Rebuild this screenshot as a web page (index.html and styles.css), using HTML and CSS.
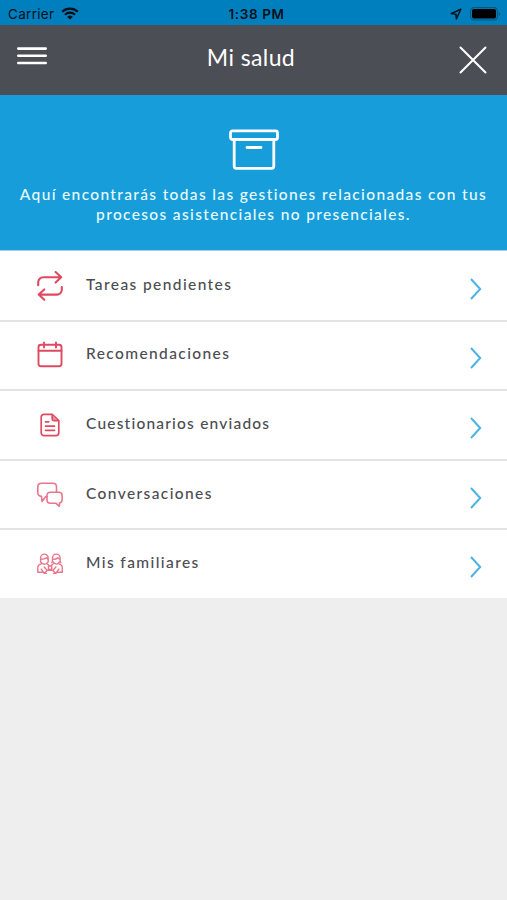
FILE: index.html
```html
<!DOCTYPE html>
<html lang="es">
<head>
    <meta charset="UTF-8">
    <meta name="viewport" content="width=device-width, initial-scale=1.0">
    <title>Mi salud</title>
    <link rel="stylesheet" href="styles.css">
</head>
<body>
    <div class="status-bar">
        <div class="status-left">
            <span class="carrier">Carrier</span>
            <svg width="18" height="13" viewBox="0 0 18 13" fill="none" stroke="#031019" stroke-width="2.2">
                <path d="M1.2 4.7a11.2 11.2 0 0 1 15.6 0M4 7.7a7.2 7.2 0 0 1 10 0"/>
                <path d="M9 12.6L6.2 9.9a4.1 4.1 0 0 1 5.6 0z" fill="#031019" stroke="none"/>
            </svg>
        </div>
        <span class="clock">1:38 PM</span>
        <div class="status-right">
            <svg width="12" height="12" viewBox="0 0 12 12" fill="none" stroke="#031019" stroke-width="1.5" stroke-linejoin="round">
                <path d="M10.8 1.2L1.2 5.6l4.7.6.5 4.7z"/>
            </svg>
            <svg width="31" height="14" viewBox="0 0 31 14">
                <rect x=".6" y=".6" width="26.8" height="12.4" rx="3.4" fill="none" stroke="#07577f" stroke-width="1.1"/>
                <rect x="2" y="2" width="24" height="9.6" rx="1.8" fill="#000"/>
                <path d="M28.7 4.7c2 .8 2 3.5 0 4.3z" fill="#07577f"/>
            </svg>
        </div>
    </div>

    <header class="nav-bar">
        <svg class="menu-icon" width="30" height="20" viewBox="0 0 30 20" stroke="#fff" stroke-width="2.6" stroke-linecap="round">
            <path d="M1.3 2.6h27.4M1.3 9.8h27.4M1.3 17h27.4"/>
        </svg>
        <h1>Mi salud</h1>
        <svg class="close-icon" width="28" height="28" viewBox="0 0 28 28" stroke="#fff" stroke-width="2" stroke-linecap="round">
            <path d="M1.5 1.5l25 25M26.5 1.5l-25 25"/>
        </svg>
    </header>

    <section class="hero">
        <svg width="50" height="42" viewBox="0 0 50 42" fill="none" stroke="#fff" stroke-width="2.8" stroke-linecap="round" stroke-linejoin="round">
            <rect x="1.5" y="1.9" width="47" height="8.6" rx="2"/>
            <path d="M5.2 10.5v26.8a2 2 0 0 0 2 2h35.6a2 2 0 0 0 2-2V10.5M18 18.5h14"/>
        </svg>
        <p>Aquí encontrarás todas las gestiones relacionadas con tus</p>
        <p>procesos asistenciales no presenciales.</p>
    </section>

    <ul class="menu">
        <li>
            <svg class="icon" viewBox="0 0 28 28" stroke-width="2.1">
                <path d="M2.2 13.3v-3a5 5 0 0 1 5-5h17.5M19.6 0l5.6 5.3-5.6 5.3M25.8 15v2.6a5 5 0 0 1-5 5H3.3M8.3 17.4l-5.6 5.2 5.6 5.2"/>
            </svg>
            <span class="label">Tareas pendientes</span>
            <svg class="chevron" viewBox="0 0 14 24"><path d="M2 2l9.2 10L2 22"/></svg>
        </li>
        <li>
            <svg class="icon" viewBox="0 0 28 28" stroke-width="1.9">
                <rect x="2.5" y="3.8" width="23" height="21.4" rx="2.5"/>
                <path d="M2.5 9.8h23M8 1.5v5M20 1.5v5"/>
            </svg>
            <span class="label">Recomendaciones</span>
            <svg class="chevron" viewBox="0 0 14 24"><path d="M2 2l9.2 10L2 22"/></svg>
        </li>
        <li>
            <svg class="icon" viewBox="0 0 28 28" stroke-width="1.7">
                <path d="M16.2 3.3H8A2.8 2.8 0 0 0 5.2 6v15.8A2.8 2.8 0 0 0 8 24.6h12a2.8 2.8 0 0 0 2.8-2.8V9.7zM16.2 3.3v4.6a1.8 1.8 0 0 0 1.8 1.8h4.8M9.5 10.8h3.2M9.5 15.2h9M9.5 19.3h9"/>
                <path d="M17 4.8l4.2 4.2H18a1 1 0 0 1-1-1z" fill="#ee8a9d" stroke="none"/>
            </svg>
            <span class="label tight">Cuestionarios enviados</span>
            <svg class="chevron" viewBox="0 0 14 24"><path d="M2 2l9.2 10L2 22"/></svg>
        </li>
        <li>
            <svg class="icon light" viewBox="0 0 28 28" stroke-width="1.6">
                <path d="M11 15.6H9.8L6 20.5l-.5-5.1C3.2 15.2 1.8 14 1.8 11.8V5.7c0-2.3 1.4-3.5 3.8-3.5h11.2c2.4 0 3.7 1.2 3.7 3.5v5.5"/>
                <path d="M14.4 11.2h8.4c2 0 3.3 1.2 3.3 3.2v4.4c0 2-.9 3-2.5 3.3l-.3 3.2-3.5-3.1h-5.4c-2.2 0-3.4-1.2-3.4-3.2v-4.6c0-2 1.2-3.2 3.4-3.2z"/>
            </svg>
            <span class="label">Conversaciones</span>
            <svg class="chevron" viewBox="0 0 14 24"><path d="M2 2l9.2 10L2 22"/></svg>
        </li>
        <li>
            <svg class="icon light" viewBox="0 0 28 28" stroke-width="1.4">
                <path d="M4.6 11.8V7.9a3.8 3.8 0 0 1 7.6 0v3.9c-1.1 1.7-2.3 2.5-3.8 2.5s-2.8-.8-3.8-2.5zM4.8 9.4c2.8 0 4.7-.5 5.6-1.7l1.7 1.7"/>
                <path d="M15.8 12.6c1-1.4.7-3 .7-4.7a3.8 3.8 0 0 1 7.6 0c0 1.7-.3 3.3.7 4.7M16.7 9.4c2.7 0 4.2-.5 5.2-1.7l2 1.7M16.9 11.7c1.9 3.2 4.9 3.2 6.8 0"/>
                <path d="M5.5 13.7l-2.4 1.2c-1 .6-1.3 1.6-1.3 2.8v4.6h5.8l-2.4-3.2M22.6 13.7l2.4 1.2c1 .6 1.3 1.6 1.3 2.8v4.6h-5.8l2.4-3.2M10.9 13.7l3.2 2.6 3.2-2.6M8.2 17.1l3.1 3.3h5.5l3.1-3.3M11.3 20.4l-3.4 3h2.6M16.8 20.4l3.4 3h-2.6M12.5 16v3.5h3.2V16"/>
            </svg>
            <span class="label">Mis familiares</span>
            <svg class="chevron" viewBox="0 0 14 24"><path d="M2 2l9.2 10L2 22"/></svg>
        </li>
    </ul>
</body>
</html>
```
FILE: styles.css
```css
* {
    box-sizing: border-box;
}
body {
    margin: 0;
    min-height: 100vh;
    background-color: #eeeeee;
    font-family: Lato, "Noto Sans", sans-serif;
    overflow: hidden;
}
svg {
    display: block;
    flex-shrink: 0;
}
.status-bar {
    height: 25px;
    padding: 2px 6px 0 8px;
    background-color: #007fbe;
    color: #031019;
    font-family: Inter, sans-serif;
    font-size: 13.5px;
    display: grid;
    grid-template-columns: 1fr auto 1fr;
    align-items: center;
}
.status-left, .status-right {
    display: flex;
    align-items: center;
    gap: 7px;
}
.status-right {
    justify-content: flex-end;
    gap: 8px;
}
.carrier {
    letter-spacing: 0.3px;
}
.clock {
    padding-left: 4px;
    font-weight: 600;
    letter-spacing: 0.6px;
}
.nav-bar {
    height: 70px;
    padding: 0 20px 0 17px;
    background-color: #4c4e55;
    color: #fff;
    display: grid;
    grid-template-columns: 1fr auto 1fr;
    align-items: center;
}
.menu-icon {
    margin-bottom: 8px;
}
.close-icon {
    justify-self: end;
}
.nav-bar h1 {
    margin: 0 0 6px;
    padding-right: 2px;
    font-size: 23px;
    font-weight: 400;
    line-height: 30px;
    letter-spacing: 0.4px;
}
.hero {
    height: 156px;
    padding-top: 34px;
    background-color: #179dd9;
    border-bottom: 1px solid #9bcfe9;
    color: #e9faff;
    display: flex;
    flex-direction: column;
    align-items: center;
}
.hero svg {
    margin-bottom: 13px;
}
.hero p {
    margin: 0;
    font-size: 15.5px;
    font-weight: 500;
    line-height: 20px;
    letter-spacing: 1.35px;
    white-space: nowrap;
}
.menu {
    margin: 0;
    padding: 1px 0 0;
    list-style: none;
    background-color: #fff;
}
.menu li {
    height: 69.6px;
    padding: 0 24px 0 36px;
    border-bottom: 2px solid #e3e3e3;
    display: flex;
    align-items: center;
}
.menu li:last-child {
    border-bottom: none;
    height: 68px;
}
.icon {
    width: 28px;
    height: 28px;
    fill: none;
    stroke: #df4a62;
    stroke-linecap: round;
    stroke-linejoin: round;
    overflow: visible;
}
.icon.light {
    stroke: #e8778c;
}
.label {
    margin: 0 auto 4px 22px;
    color: #4b4d51;
    font-size: 15.5px;
    font-weight: 500;
    line-height: 20px;
    letter-spacing: 1.4px;
}
.label.tight {
    letter-spacing: 1.2px;
}
.chevron {
    width: 14px;
    height: 24px;
    margin-top: 6px;
    fill: none;
    stroke: #4db4e2;
    stroke-width: 2;
}
```
